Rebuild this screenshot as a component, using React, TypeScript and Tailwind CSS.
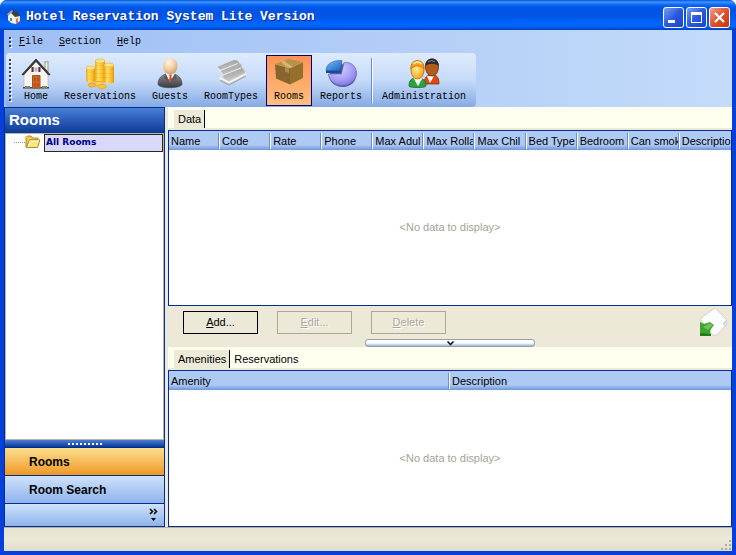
import React, { useState } from 'react';
import clsx from 'clsx';

const roomColumns = [
    'Name',
    'Code',
    'Rate',
    'Phone',
    'Max Adul',
    'Max Rolla',
    'Max Chil',
    'Bed Type',
    'Bedroom',
    'Can smok',
    'Descriptio',
];

const amenityColumns = ['Amenity', 'Description'];

function AppIcon() {
    return (
        <svg viewBox="0 0 16 16" className="h-4 w-4">
            <path d="M1 5 6 1l6 2 2 5-4 1-6-1z" fill="#3c4046" />
            <path d="M1 5 6 1l1 1-4 6z" fill="#9a9ea4" />
            <path d="M2 7l3-3 5 5v6l-5-1-3-3z" fill="#f0f0ee" />
            <path d="M9 8l5-1v5l-4 3z" fill="#e6e6e4" />
            <path d="M4 9h2v3H4z" fill="#6f7e95" />
            <path d="M10 10l2-1v5l-2 1z" fill="#e87428" />
        </svg>
    );
}

function HomeIcon() {
    return (
        <svg viewBox="0 0 32 32" className="-mx-1 h-8 w-8">
            <path d="M25 4.500h3v10l-3-3z" fill="#f4f1e6" stroke="#8d8672" strokeWidth="0.8" />
            <path d="M24.500 4h4v1.500h-4z" fill="#b9ad8e" />
            <path d="M4 17 16 3l12 14v14H4z" fill="#f8f6f2" stroke="#b5b0a8" strokeWidth="0.6" />
            <path d="M3 30h26v1.500H3z" fill="#55443a" />
            <path d="M2 17.500 16 2l14 15.500-1.500.5L16 4.500 3.500 18z" fill="#3b3a3c" stroke="#29282a" strokeWidth="0.8" />
            <path d="M11.500 10h9v5h-9z" fill="#70282c" />
            <path d="M14 10h4v5h-4z" fill="#a9bfd8" stroke="#fff" strokeWidth="0.7" />
            <path d="M12.500 18.500h7.500V31h-7.500z" fill="#d9621c" stroke="#8c5a35" />
            <path d="M14.200 20.500h1.600v4h-1.600zM17 20.500h1.600v4H17zM14.200 26h1.600v4h-1.600zM17 26h1.600v4H17z" fill="#bd4c10" />
            <path d="M5 29h5v2H5zM22 29h5v2h-5z" fill="#7e8b60" />
        </svg>
    );
}

function CoinsIcon() {
    return (
        <svg viewBox="0 0 32 32" className="-mx-1 h-8 w-8">
            <defs>
                <linearGradient id="gold" x1="0" x2="1">
                    <stop offset="0" stopColor="#f0a818" />
                    <stop offset="0.35" stopColor="#ffe268" />
                    <stop offset="0.7" stopColor="#fbc02c" />
                    <stop offset="1" stopColor="#e8960c" />
                </linearGradient>
            </defs>
            <path d="M11 4v20c0 2 10 2 10 0V4z" fill="url(#gold)" />
            <ellipse cx="16" cy="4" rx="5" ry="2" fill="#ffe680" stroke="#dfa01c" strokeWidth="0.5" />
            <path d="M2 11v13c0 2 9 2 9 0V11z" fill="url(#gold)" />
            <ellipse cx="6.500" cy="11" rx="4.500" ry="2" fill="#ffe680" stroke="#dfa01c" strokeWidth="0.5" />
            <path d="M20 8v17c0 2 10 2 10 0V8z" fill="url(#gold)" />
            <ellipse cx="25" cy="8" rx="5" ry="2" fill="#ffe680" stroke="#dfa01c" strokeWidth="0.5" />
            <path
                d="M2 14.500q4.500 2 9 0M2 18q4.500 2 9 0M2 21.500q4.500 2 9 0M11 8q5 2 10 0M11 12q5 2 10 0M11 16q5 2 10 0M11 20q5 2 10 0M20 12q5 2 10 0M20 16q5 2 10 0M20 20q5 2 10 0"
                fill="none"
                stroke="#e09a14"
                strokeWidth="0.6"
                opacity="0.5"
            />
            <ellipse cx="8" cy="28" rx="4" ry="2" fill="#f9be28" stroke="#e09410" strokeWidth="0.6" />
            <ellipse cx="15" cy="26.500" rx="4" ry="2" fill="#ffd750" stroke="#e09410" strokeWidth="0.6" />
            <ellipse cx="18" cy="29.500" rx="4.500" ry="2" fill="#fcc738" stroke="#e09410" strokeWidth="0.6" />
        </svg>
    );
}

function GuestIcon() {
    return (
        <svg viewBox="0 0 32 32" className="-mx-1 h-8 w-8">
            <defs>
                <radialGradient id="skin" cx="0.4" cy="0.25" r="0.8">
                    <stop offset="0" stopColor="#fff6e6" />
                    <stop offset="0.5" stopColor="#f2d0a4" />
                    <stop offset="1" stopColor="#c99a66" />
                </radialGradient>
                <linearGradient id="suit" x1="0" x2="0" y1="0" y2="1">
                    <stop offset="0" stopColor="#8d8d90" />
                    <stop offset="1" stopColor="#3a3a3e" />
                </linearGradient>
            </defs>
            <path d="M4 27c0-6 4-9 8-10h8c4 1 8 4 8 10 0 5-24 5-24 0z" fill="url(#suit)" stroke="#4a4a4e" strokeWidth="0.6" />
            <path d="M11.500 16.500 16 25l5-8.500-2-1h-6z" fill="#f7f7f7" />
            <path d="M15 17.500h3l-.6 2 .8 4-1.700 2-1.500-2 .7-4z" fill="#dc4a22" />
            <path d="M11.500 16.500 9.500 21l6.500 5zM21 16.500l2 4.500-7 5z" fill="#5c5c60" />
            <path d="M9 8.500C9 4 12 1.500 16.200 1.500S23.500 4 23.500 8.500c0 5-3 9-7.300 9S9 13.500 9 8.500z" fill="url(#skin)" />
        </svg>
    );
}

function RoomTypesIcon() {
    return (
        <svg viewBox="0 0 32 32" className="-mx-1 h-8 w-8">
            <defs>
                <linearGradient id="steel" x1="0" x2="0.4" y1="0" y2="1">
                    <stop offset="0" stopColor="#d8d8d8" />
                    <stop offset="0.3" stopColor="#a4a4a4" />
                    <stop offset="1" stopColor="#c6c6c6" />
                </linearGradient>
            </defs>
            <path d="M5 20 29 12l2 7-17 9-8-4z" fill="#cdcdcd" />
            <path d="M2 10 19 3c3 0 5 1 5 3L8 14l-3-1z" fill="url(#steel)" />
            <path d="M5 13 22 6c4 0 5 2 5 5L11 18l-4-1z" fill="url(#steel)" />
            <path d="M8 18 24 10.500c4 0 5 2 6 5L14 23l-4-1z" fill="url(#steel)" />
            <path d="M2 10.500 5 14M5 13.500 8 18M8 18.500 5 20v3" fill="none" stroke="#e8e8e8" strokeWidth="1.200" />
            <path d="M5 13.500 23 6.500M8 18 26 11" fill="none" stroke="#ececec" strokeWidth="1.200" />
            <path d="M5 21l9 4.500L31 17" fill="none" stroke="#f6f6f6" strokeWidth="1.500" />
            <path d="M5 23.500l9 4.500 17-9" fill="none" stroke="#8e8e8e" strokeWidth="0.8" />
        </svg>
    );
}

function BoxIcon() {
    return (
        <svg viewBox="0 0 32 32" className="-mx-1 h-8 w-8">
            <path d="M2 7 16 2l14 3-12 6z" fill="#b8924a" />
            <path d="M2 7 17 11v16.500L3 21.500z" fill="#86662e" />
            <path d="M17 11 30 5v16l-13 6.500z" fill="#94702f" />
            <path d="M8 5 11 4l9 6-3 1-3-1z" fill="#e3c88a" opacity="0.7" />
            <path d="M12 10l4 1v5l-4-1.500z" fill="#b08a46" />
            <path d="M2 7 17 11 30 5" fill="none" stroke="#caa660" strokeWidth="0.7" />
        </svg>
    );
}

function PieIcon() {
    return (
        <svg viewBox="0 0 32 32" className="-mx-1 h-8 w-8">
            <defs>
                <radialGradient id="violet" cx="0.4" cy="0.3" r="0.8">
                    <stop offset="0" stopColor="#d4d0ff" />
                    <stop offset="0.6" stopColor="#a39cf4" />
                    <stop offset="1" stopColor="#7468d8" />
                </radialGradient>
                <linearGradient id="azure" x1="0" x2="1" y1="0" y2="1">
                    <stop offset="0" stopColor="#7cbcf6" />
                    <stop offset="1" stopColor="#1762c0" />
                </linearGradient>
            </defs>
            <path d="M19 6c7-1 12.500 4 12.500 11S26 30 17.500 30C10 30 4 25 3.500 17.500z" fill="#55589c" />
            <path d="M19 5.500c7-1 12.500 4 12.500 10.500S26 28.500 17.500 28.500C10 28.500 4 24 3.500 17H16.500z" fill="url(#violet)" stroke="#6b66b8" strokeWidth="0.6" />
            <path d="M1 13v3h14.500L17 5z" fill="#134c98" />
            <path d="M1 13.500C1 7.500 7 3 17 3.500l-2 10z" fill="url(#azure)" stroke="#2a64ac" strokeWidth="0.6" />
        </svg>
    );
}

function AdminIcon() {
    return (
        <svg viewBox="0 0 32 32" className="-mx-1 h-8 w-8">
            <defs>
                <radialGradient id="yellowFace" cx="0.4" cy="0.4" r="0.7">
                    <stop offset="0" stopColor="#fff08c" />
                    <stop offset="1" stopColor="#f59a12" />
                </radialGradient>
            </defs>
            <path d="M16 27c0-6 3-9 6-9h3c4 0 6 3 6 9z" fill="#db4a12" stroke="#8e2e08" strokeWidth="0.8" />
            <path d="M19 19l3 7 4-7z" fill="#fff" />
            <path d="M17.500 9c0-9 13-9 13 0 0 6-2.500 10-6.500 10s-6.500-4-6.500-10z" fill="#b25c1c" stroke="#6b2d08" strokeWidth="0.8" />
            <path d="M17.500 9c-.5-5 3-7.500 6.500-7.500s7 2.500 6.500 7.500c-3-3-10-3-13 0z" fill="#2b2b2e" />
            <path d="M20 5q4-3 7 0" stroke="#87878e" fill="none" />
            <path d="M1 29c0-6 3-8 7-8h3c4 0 7 3 7 8 0 2-17 2-17 0z" fill="#2ca43c" stroke="#146a22" strokeWidth="0.8" />
            <path d="M5.500 21 10 29l4.500-8z" fill="#fff" />
            <path d="M3 12c0-10 13-10 13 0 0 6-2.500 10-6.500 10S3 18 3 12z" fill="url(#yellowFace)" stroke="#bd6606" strokeWidth="0.8" />
            <path d="M3 12c-.5-6 3-8.500 6.500-8.500s7 2.500 6.500 8.500c-3-4-10-4-13 0z" fill="#f59d16" stroke="#c26a06" strokeWidth="0.7" />
            <path d="M5.500 7q4-4 8 0" stroke="#fff2a4" fill="none" strokeWidth="1.400" />
        </svg>
    );
}

function FolderIcon() {
    return (
        <svg viewBox="0 0 16 14" className="h-[14px] w-4">
            <path d="M1 12V2.500L2.500 1H6l1.500 2H13v2H5z" fill="#f0ca50" stroke="#b08c24" />
            <path d="M1.500 12.500 4.500 5H15l-2.500 7.500z" fill="#ffe884" stroke="#b08c24" />
            <path d="M3 12 5 6h9" fill="none" stroke="#fffbe0" />
        </svg>
    );
}

function SheetIcon() {
    return (
        <svg viewBox="0 0 28 30" className="h-[30px] w-7">
            <path d="M1 11 15 1c1 0 2 1 3 3l8 8c1 2 1 4 0 6L17 28c-1 1-3 0-5-1L1 13z" fill="#fdfdfd" stroke="#d0d0d0" />
            <path d="M26 14c-3 1-3 4 0 5" fill="#e4e8f4" stroke="#b4bccc" />
            <path d="M0 15l4 2 6-2 4 3-3 4-1 3 1 3H0z" fill="#3da52c" />
            <path d="M3 20l7-4 3 2-5 5z" fill="#87cc68" opacity="0.7" />
            <path d="M0 26l11 1v2H0z" fill="#237a1a" />
        </svg>
    );
}

const tools = [
    { label: 'Home', icon: <HomeIcon /> },
    { label: 'Reservations', icon: <CoinsIcon /> },
    { label: 'Guests', icon: <GuestIcon /> },
    { label: 'RoomTypes', icon: <RoomTypesIcon /> },
    { label: 'Rooms', icon: <BoxIcon /> },
    { label: 'Reports', icon: <PieIcon /> },
    { label: 'Administration', icon: <AdminIcon /> },
];

function Grip({ dots }: { dots: number }) {
    return (
        <span className="flex flex-col gap-[2px]">
            {Array.from({ length: dots }, (_, i) => (
                <span
                    key={i}
                    className="h-[2px] w-[2px] bg-[#27417b] shadow-[1px_1px_0_#fff]"
                />
            ))}
        </span>
    );
}

function TitleBar() {
    return (
        <header className="flex h-[30px] shrink-0 items-center bg-[linear-gradient(#0a4fd8_0px,#3d95ff_2px,#0867f5_5px,#0054e3_8px,#0055e5_16px,#0066ff_24px,#0060f5_27px,#0040c0_30px)] px-[6px] pt-1">
            <AppIcon />
            <h1 className="ml-1 flex-1 truncate font-['Liberation_Mono',monospace] text-[13px] leading-4 font-bold text-white [text-shadow:1px_1px_0_#0a2a80]">
                Hotel Reservation System Lite Version
            </h1>
            <div className="flex gap-[2px]">
                <button
                    aria-label="Minimize"
                    className="h-[21px] w-[21px] rounded-[3px] border border-white bg-linear-to-br from-[#7c9df5] via-[#2a58e0] to-[#1c46cc]"
                >
                    <svg viewBox="0 0 19 19" className="h-full w-full">
                        <path d="M4 12h7v3H4z" fill="#fff" />
                    </svg>
                </button>
                <button
                    aria-label="Maximize"
                    className="h-[21px] w-[21px] rounded-[3px] border border-white bg-linear-to-br from-[#7c9df5] via-[#2a58e0] to-[#1c46cc]"
                >
                    <svg viewBox="0 0 19 19" className="h-full w-full">
                        <path d="M4 4h11v11H4zM5 7v7h9V7z" fill="#fff" fillRule="evenodd" />
                    </svg>
                </button>
                <button
                    aria-label="Close"
                    className="h-[21px] w-[21px] rounded-[3px] border border-white bg-linear-to-br from-[#f0a088] via-[#e0502c] to-[#c03810]"
                >
                    <svg viewBox="0 0 19 19" className="h-full w-full">
                        <path d="M5 5l9 9M14 5l-9 9" stroke="#fff" strokeWidth="2.200" />
                    </svg>
                </button>
            </div>
        </header>
    );
}

function MenuBar() {
    return (
        <nav className="flex h-[23px] items-center pl-[5px]">
            <Grip dots={3} />
            {['File', 'Section', 'Help'].map((item) => (
                <button key={item} className="px-2">
                    <u>{item[0]}</u>
                    {item.slice(1)}
                </button>
            ))}
        </nav>
    );
}

function ToolBar({
    active,
    onSelect,
}: {
    active: string;
    onSelect: (label: string) => void;
}) {
    return (
        <div className="ml-[2px] flex h-[54px] w-fit items-center rounded-r-[4px] rounded-l-[3px] bg-linear-to-b from-[#deebfd] via-[#c6dbf9] to-[#86aae4] pr-[2px] pl-[3px]">
            <Grip dots={11} />
            <div className="ml-[5px] flex items-center">
                {tools.map(({ label, icon }) => (
                    <React.Fragment key={label}>
                        {label === 'Administration' && (
                            <span className="mx-px h-[45px] w-[2px] border-r border-white bg-[#6a8ccb]" />
                        )}
                        <button
                            onClick={() => onSelect(label)}
                            className={clsx(
                                'flex h-[51px] flex-col items-center border px-[7px] pt-px',
                                label === active
                                    ? 'border-[#000080] bg-linear-to-b from-[#fd9255] to-[#fdbf7c]'
                                    : 'border-transparent'
                            )}
                        >
                            {icon}
                            <span className="leading-4">{label}</span>
                        </button>
                    </React.Fragment>
                ))}
            </div>
        </div>
    );
}

function Sidebar() {
    const [section, setSection] = useState('Rooms');

    return (
        <aside className="flex w-[161px] shrink-0 flex-col border border-[#002d96] bg-[#002d96] font-['Liberation_Sans',sans-serif]">
            <h2 className="h-[25px] bg-linear-to-b from-[#4a7fd8] to-[#0a3a94] pl-1 text-[15px] leading-6 font-bold text-white">
                Rooms
            </h2>
            <div className="flex flex-1 items-start border border-[#b8b4a4] bg-white pl-2">
                <span className="mt-2 w-[11px] border-t border-dotted border-[#999]" />
                <span className="mt-px mr-[3px]">
                    <FolderIcon />
                </span>
                <button className="h-[18px] flex-1 border border-[#2a2a10] bg-[#dad8fa] pl-px text-left font-['DejaVu_Sans',sans-serif] text-[9px] font-bold text-[#000080]">
                    All Rooms
                </button>
            </div>
            <div className="flex h-[7px] items-center justify-center gap-[2px] bg-linear-to-b from-[#4a7fd8] to-[#0a3a94]">
                {Array.from({ length: 9 }, (_, i) => (
                    <span key={i} className="h-[2px] w-[2px] bg-white" />
                ))}
            </div>
            {['Rooms', 'Room Search'].map((item) => (
                <button
                    key={item}
                    onClick={() => setSection(item)}
                    className={clsx(
                        'mt-px h-[27px] bg-linear-to-b pl-6 text-left text-[12px] font-bold',
                        section === item
                            ? 'from-[#fbdf8c] to-[#ee9818]'
                            : 'from-[#cfe2fc] to-[#8eb3ea]'
                    )}
                >
                    {item}
                </button>
            ))}
            <div className="mt-px flex h-[22px] justify-end bg-linear-to-b from-[#cfe2fc] to-[#8eb3ea] pr-[6px]">
                <button aria-label="Configure buttons">
                    <svg viewBox="0 0 9 16" className="h-4 w-[9px]">
                        <path
                            d="M1 2l2.500 2.500L1 7M5 2l2.500 2.500L5 7"
                            fill="none"
                            stroke="#000"
                            strokeWidth="1.500"
                        />
                        <path d="M2 11h5l-2.500 3z" fill="#000" />
                    </svg>
                </button>
            </div>
        </aside>
    );
}

function Tabs({ items }: { items: string[] }) {
    const [selected, setSelected] = useState(items[0]);

    return (
        <div className="flex h-[23px] shrink-0 items-end border-b-2 border-[#ece9d8] bg-[#fffff0] pl-[6px]">
            {items.map((item) => (
                <button
                    key={item}
                    onClick={() => setSelected(item)}
                    className={clsx(
                        'h-[18px] pr-[3px] pl-1 leading-[18px]',
                        selected === item && 'border-r border-black bg-[#ece9d8]'
                    )}
                >
                    {item}
                </button>
            ))}
        </div>
    );
}

function DataGrid({
    columns,
    className,
}: {
    columns: string[];
    className: string;
}) {
    return (
        <div className={clsx('flex flex-col border border-[#002d96] bg-white', className)}>
            <table className="w-full table-fixed border-collapse">
                <thead>
                    <tr className="h-[19px] bg-[linear-gradient(#aecaf2_0px,#aecaf2_14px,#6f97dc_19px)]">
                        {columns.map((column) => (
                            <th
                                key={column}
                                className="group p-0 text-left font-normal"
                            >
                                <div className="flex">
                                    <span className="flex-1 overflow-hidden pl-[2px] leading-4 whitespace-nowrap">
                                        {column}
                                    </span>
                                    <span className="h-4 w-[2px] border-r border-white bg-[#6a8ccb] group-last:hidden" />
                                </div>
                            </th>
                        ))}
                    </tr>
                </thead>
            </table>
            <p className="flex flex-1 items-center justify-center text-[#a5a296]">
                &lt;No data to display&gt;
            </p>
        </div>
    );
}

function RoomActions() {
    const actions = [
        { label: 'Add...', disabled: false },
        { label: 'Edit...', disabled: true },
        { label: 'Delete', disabled: true },
    ];

    return (
        <div className="flex h-[33px] shrink-0 items-start pt-[5px] pr-1 pl-[15px]">
            <div className="flex flex-1 gap-[19px]">
                {actions.map(({ label, disabled }) => (
                    <button
                        key={label}
                        disabled={disabled}
                        className="h-[23px] w-[75px] border border-black disabled:border-[#aca899] disabled:text-[#aca899] disabled:[text-shadow:1px_1px_0_#fff]"
                    >
                        <u>{label[0]}</u>
                        {label.slice(1)}
                    </button>
                ))}
            </div>
            <button aria-label="Export" className="-mt-1">
                <SheetIcon />
            </button>
        </div>
    );
}

export default function App() {
    const [active, setActive] = useState('Rooms');

    return (
        <div className="flex h-screen flex-col overflow-hidden rounded-t-[7px] bg-[#0045d8] text-[11px] text-black">
            <TitleBar />
            <div className="flex min-h-0 flex-1 flex-col border-x-4 border-b-4 border-[#0540dd] bg-[#ece9d8]">
                <div className="bg-linear-to-r from-[#9ebef5] to-[#c4dcf9] font-['Liberation_Mono',monospace] text-[10px]">
                    <MenuBar />
                    <ToolBar active={active} onSelect={setActive} />
                </div>
                <div className="flex min-h-0 flex-1">
                    <Sidebar />
                    <main className="ml-[3px] flex min-w-0 flex-1 flex-col font-['Liberation_Sans',sans-serif]">
                        <Tabs items={['Data']} />
                        <DataGrid columns={roomColumns} className="h-44 shrink-0" />
                        <RoomActions />
                        <button
                            aria-label="Collapse details"
                            className="flex h-2 w-[170px] shrink-0 items-center justify-center self-center rounded-[3px] border border-[#98a0a0] bg-linear-to-b from-white via-white to-[#90b4dc]"
                        >
                            <svg viewBox="0 0 7 5" className="h-[5px] w-[7px]">
                                <path d="M.5.500l3 3 3-3" fill="none" stroke="#000" strokeWidth="1.500" />
                            </svg>
                        </button>
                        <Tabs items={['Amenities', 'Reservations']} />
                        <DataGrid columns={amenityColumns} className="flex-1" />
                    </main>
                </div>
                <footer className="flex h-6 shrink-0 items-end justify-end border-t border-[#b4b09c] bg-linear-to-b from-[#e6e3d0] via-[#ece9d8] to-[#e0ddca]">
                    <svg viewBox="0 0 12 12" className="h-3 w-3">
                        <path
                            d="M9 1h2v2H9zM5 5h2v2H5zM9 5h2v2H9zM1 9h2v2H1zM5 9h2v2H5zM9 9h2v2H9z"
                            fill="#b0ad9c"
                        />
                    </svg>
                </footer>
            </div>
        </div>
    );
}
